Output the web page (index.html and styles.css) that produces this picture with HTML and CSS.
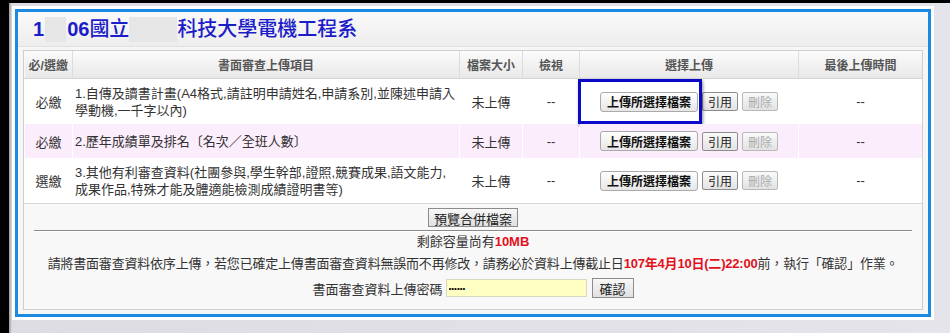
FILE: index.html
```html
<!DOCTYPE html>
<html lang="zh-Hant">
<head>
    <meta charset="UTF-8">
    <meta name="viewport" content="width=device-width, initial-scale=1.0">
    <title>書面審查資料上傳</title>
    <link rel="stylesheet" href="styles.css">
</head>
<body>

<div class="screen">
    <div class="window">
        <div class="frame">
            <div class="panel">
                <h1 class="title"><span class="num">1</span><span class="redact redact-short"></span><span class="num">06</span>國立<span class="redact redact-long"></span>科技大學電機工程系</h1>

                <div class="box">
                    <table class="upload">
                        <colgroup>
                            <col class="c-req">
                            <col class="c-item">
                            <col class="c-size">
                            <col class="c-view">
                            <col class="c-pick">
                            <col>
                        </colgroup>
                        <thead>
                            <tr>
                                <th>必/選繳</th>
                                <th>書面審查上傳項目</th>
                                <th>檔案大小</th>
                                <th>檢視</th>
                                <th>選擇上傳</th>
                                <th>最後上傳時間</th>
                            </tr>
                        </thead>
                        <tbody>
                            <tr class="tall">
                                <td>必繳</td>
                                <td class="item">1.自傳及讀書計畫(A4格式,請註明申請姓名,申請系別,並陳述申請入<br>學動機,一千字以內)</td>
                                <td>未上傳</td>
                                <td>--</td>
                                <td class="pick">
                                    <div class="actions">
                                        <button class="btn-upload">上傳所選擇檔案</button>
                                        <button class="btn">引用</button>
                                        <button class="btn" disabled>刪除</button>
                                    </div>
                                    <span class="callout"></span>
                                </td>
                                <td>--</td>
                            </tr>
                            <tr class="short pink">
                                <td>必繳</td>
                                <td class="item">2.歷年成績單及排名〔名次／全班人數〕</td>
                                <td>未上傳</td>
                                <td>--</td>
                                <td class="pick">
                                    <div class="actions">
                                        <button class="btn-upload">上傳所選擇檔案</button>
                                        <button class="btn">引用</button>
                                        <button class="btn" disabled>刪除</button>
                                    </div>
                                </td>
                                <td>--</td>
                            </tr>
                            <tr class="tall last">
                                <td>選繳</td>
                                <td class="item">3.其他有利審查資料(社團參與,學生幹部,證照,競賽成果,語文能力,<br>成果作品,特殊才能及體適能檢測成績證明書等)</td>
                                <td>未上傳</td>
                                <td>--</td>
                                <td class="pick">
                                    <div class="actions">
                                        <button class="btn-upload">上傳所選擇檔案</button>
                                        <button class="btn">引用</button>
                                        <button class="btn" disabled>刪除</button>
                                    </div>
                                </td>
                                <td>--</td>
                            </tr>
                        </tbody>
                    </table>

                    <div class="summary">
                        <button class="btn-plain">預覽合併檔案</button>
                        <hr>
                        <p>剩餘容量尚有<b class="red">10MB</b></p>
                        <p class="notice">請將書面審查資料依序上傳，若您已確定上傳書面審查資料無誤而不再修改，請務必於資料上傳截止日<b class="red">107年4月10日(二)22:00</b>前，執行「確認」作業。</p>
                        <div class="password">
                            <label for="pw">書面審查資料上傳密碼</label>
                            <input id="pw" type="password" value="123456">
                            <button class="btn-plain">確認</button>
                        </div>
                    </div>
                </div>
            </div>
        </div>
    </div>
</div>

</body>
</html>
```

FILE: styles.css
```css
body {
    margin: 0;
    background-color: #000;
    font-family: "Liberation Sans", "Noto Sans CJK TC", sans-serif;
    font-size: 13px;
    color: #333;
}
.screen {
    height: 333px;
    box-sizing: border-box;
    padding: 3px 0 0 9px;
    overflow: hidden;
}
.window {
    height: 330px;
    box-sizing: border-box;
    padding: 3px 16px 13px 3px;
    background: linear-gradient(to right, #9a9aa0 0, #dcdce2 3px, #e4e4ea 100%);
}
.frame {
    height: 100%;
    box-sizing: border-box;
    padding: 3px;
    background-color: #fff;
}
.panel {
    height: 100%;
    box-sizing: border-box;
    border: 3px solid #1a8be2;
    background-color: #f6f6f6;
    padding: 0 5px 5px;
}
.title {
    margin: 0 -5px;
    height: 34px;
    line-height: 34px;
    padding-left: 15px;
    font-size: 20px;
    font-weight: 500;
    color: #1c1cc9;
    background: linear-gradient(#fafafa, #ededed);
    border-bottom: 1px solid #e0e0e0;
    display: flex;
    align-items: center;
}
.title .num {
    font-weight: bold;
}
.redact {
    display: inline-block;
    height: 25px;
    background-color: #e6e6e6;
}
.redact-short {
    width: 21px;
    margin: 0 1px 0 1px;
}
.redact-long {
    width: 48px;
}
.box {
    margin-top: 3px;
    border: 1px solid #cfcfcf;
    background-color: #f8f8f8;
}
.upload {
    width: 100%;
    border-collapse: collapse;
    table-layout: fixed;
}
.c-req { width: 48px; }
.c-item { width: 387px; }
.c-size { width: 63px; }
.c-view { width: 57px; }
.c-pick { width: 219px; }
.upload th {
    height: 27px;
    padding: 0;
    font-size: 12px;
    font-weight: bold;
    color: #555;
    background: linear-gradient(#fbfbfb, #e8e8e8);
    border-left: 1px solid #dcdcdc;
    border-bottom: 1px solid #d4d4d4;
}
.upload th:first-child {
    border-left: none;
}
.upload td {
    padding: 0;
    text-align: center;
    background-color: #fff;
    border-left: 1px solid #fff;
}
.upload tr.tall td { height: 45px; }
.upload tr.short td { height: 34px; }
.upload tr.pink td {
    background-color: #fcedfc;
}
.upload tr.last td {
    border-bottom: 1px solid #d8d8d8;
}
.upload td.item {
    text-align: left;
    padding-left: 2px;
    line-height: 17px;
}
.upload td.pick {
    position: relative;
}
.actions {
    display: flex;
    justify-content: center;
    align-items: center;
    gap: 4px;
}
.btn-upload {
    height: 20px;
    padding: 0 6px;
    font-family: inherit;
    font-size: 12px;
    font-weight: bold;
    color: #111;
    border: 1px solid #aaa;
    border-radius: 3px;
    background: linear-gradient(#ffffff, #e6e6e6);
}
.btn {
    height: 19px;
    padding: 0 5px;
    font-family: inherit;
    font-size: 12px;
    color: #222;
    border: 1px solid #8c8c8c;
    border-radius: 2px;
    background: linear-gradient(#fafafa, #e2e2e2);
}
.btn:disabled {
    color: #aaa;
    border-color: #b8b8b8;
}
.callout {
    position: absolute;
    left: -2px;
    top: 0;
    width: 118px;
    height: 39px;
    border: 3px solid #0a0ac8;
    box-shadow: 1px 2px 3px rgba(0, 0, 0, 0.45);
}
.summary {
    text-align: center;
    padding: 4px 0 11px;
}
.btn-plain {
    height: 19px;
    padding: 0 5px;
    font-family: inherit;
    font-size: 13px;
    color: #222;
    border: 1px solid #8c8c8c;
    background: linear-gradient(#f8f8f8, #e0e0e0);
}
.summary hr {
    margin: 3px 10px 1px;
    border: none;
    border-top: 1px solid #8a8a8a;
    border-bottom: 1px solid #fff;
}
.summary p {
    margin: 0;
    line-height: 17px;
}
.summary p.notice {
    margin-top: 5px;
    letter-spacing: -0.2px;
}
.red {
    color: #e2101c;
}
.password {
    margin-top: 6px;
    display: flex;
    justify-content: center;
    align-items: center;
    gap: 3px;
}
.password input {
    width: 135px;
    height: 14px;
    padding: 1px 2px;
    font-size: 8px;
    border: 1px solid #d8d8c0;
    background-color: #ffffc4;
    margin-right: 2px;
}
.password .btn-plain {
    height: 20px;
    padding: 0 7px;
}
```
